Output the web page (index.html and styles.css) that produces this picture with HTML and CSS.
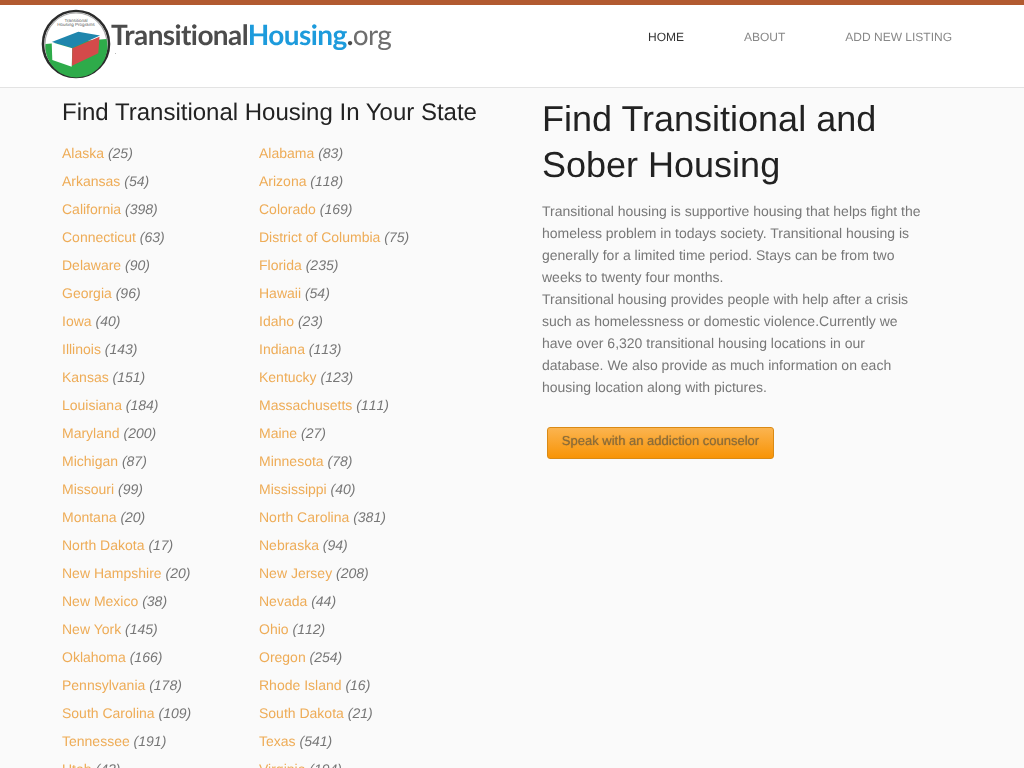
FILE: index.html
```html
<!DOCTYPE html>
<html lang="en">
<head>
<meta charset="utf-8">
<title>Transitional Housing</title>
<link rel="stylesheet" href="styles.css">
</head>
<body>
<header class="site-header">
  <a class="logo" href="#">
    <svg class="logo-mark" width="70" height="70" viewBox="0 0 70 70" aria-hidden="true">
      <circle cx="35" cy="35" r="33" fill="#fff" stroke="#2c2c2c" stroke-width="2.6"/>
      <circle cx="35" cy="35" r="31" fill="none" stroke="#a9a9a9" stroke-width="1.2"/>
      <path d="M4.5 35 L65.5 30 A31 31 0 1 1 4.5 35 Z" fill="#2eab4a"/>
      <path d="M10.7 33 L37.3 22.7 L59 26.5 L31.3 39 Z" fill="#1f86ad"/>
      <path d="M10.7 33.3 L31.3 39.3 L30.7 57.7 L11.3 51 Z" fill="#fff"/>
      <path d="M31.3 39.3 L58.5 27.7 L57.3 44.3 L31 56.7 Z" fill="#d44a4a"/>
      <text class="logo-tiny" x="35" y="12.5" text-anchor="middle">Transitional</text>
      <text class="logo-tiny" x="35" y="17" text-anchor="middle">Housing Programs</text>
    </svg>
    <span class="logo-text"><span class="logo-dark">Transitional</span><span class="logo-blue">Housing</span><span class="logo-dot">.</span><span class="logo-org">org</span></span>
  </a>
  <nav class="main-nav">
    <a class="nav-link active" href="#">Home</a>
    <a class="nav-link" href="#">About</a>
    <a class="nav-link" href="#">Add New Listing</a>
  </nav>
</header>
<main class="content">
  <section class="states">
    <h2 class="states-title">Find Transitional Housing In Your State</h2>
    <ul class="state-list">
      <li><a href="#">Alaska</a> <em>(25)</em></li><li><a href="#">Alabama</a> <em>(83)</em></li>
      <li><a href="#">Arkansas</a> <em>(54)</em></li><li><a href="#">Arizona</a> <em>(118)</em></li>
      <li><a href="#">California</a> <em>(398)</em></li><li><a href="#">Colorado</a> <em>(169)</em></li>
      <li><a href="#">Connecticut</a> <em>(63)</em></li><li><a href="#">District of Columbia</a> <em>(75)</em></li>
      <li><a href="#">Delaware</a> <em>(90)</em></li><li><a href="#">Florida</a> <em>(235)</em></li>
      <li><a href="#">Georgia</a> <em>(96)</em></li><li><a href="#">Hawaii</a> <em>(54)</em></li>
      <li><a href="#">Iowa</a> <em>(40)</em></li><li><a href="#">Idaho</a> <em>(23)</em></li>
      <li><a href="#">Illinois</a> <em>(143)</em></li><li><a href="#">Indiana</a> <em>(113)</em></li>
      <li><a href="#">Kansas</a> <em>(151)</em></li><li><a href="#">Kentucky</a> <em>(123)</em></li>
      <li><a href="#">Louisiana</a> <em>(184)</em></li><li><a href="#">Massachusetts</a> <em>(111)</em></li>
      <li><a href="#">Maryland</a> <em>(200)</em></li><li><a href="#">Maine</a> <em>(27)</em></li>
      <li><a href="#">Michigan</a> <em>(87)</em></li><li><a href="#">Minnesota</a> <em>(78)</em></li>
      <li><a href="#">Missouri</a> <em>(99)</em></li><li><a href="#">Mississippi</a> <em>(40)</em></li>
      <li><a href="#">Montana</a> <em>(20)</em></li><li><a href="#">North Carolina</a> <em>(381)</em></li>
      <li><a href="#">North Dakota</a> <em>(17)</em></li><li><a href="#">Nebraska</a> <em>(94)</em></li>
      <li><a href="#">New Hampshire</a> <em>(20)</em></li><li><a href="#">New Jersey</a> <em>(208)</em></li>
      <li><a href="#">New Mexico</a> <em>(38)</em></li><li><a href="#">Nevada</a> <em>(44)</em></li>
      <li><a href="#">New York</a> <em>(145)</em></li><li><a href="#">Ohio</a> <em>(112)</em></li>
      <li><a href="#">Oklahoma</a> <em>(166)</em></li><li><a href="#">Oregon</a> <em>(254)</em></li>
      <li><a href="#">Pennsylvania</a> <em>(178)</em></li><li><a href="#">Rhode Island</a> <em>(16)</em></li>
      <li><a href="#">South Carolina</a> <em>(109)</em></li><li><a href="#">South Dakota</a> <em>(21)</em></li>
      <li><a href="#">Tennessee</a> <em>(191)</em></li><li><a href="#">Texas</a> <em>(541)</em></li>
      <li><a href="#">Utah</a> <em>(43)</em></li><li><a href="#">Virginia</a> <em>(194)</em></li>
    </ul>
  </section>
  <section class="intro">
    <h1 class="intro-title">Find Transitional and Sober Housing</h1>
    <p class="intro-text">Transitional housing is supportive housing that helps fight the homeless problem in todays society. Transitional housing is generally for a limited time period. Stays can be from two weeks to twenty four months.<br>Transitional housing provides people with help after a crisis such as homelessness or domestic violence.Currently we have over 6,320 transitional housing locations in our database. We also provide as much information on each housing location along with pictures.</p>
    <a class="cta" href="#">Speak with an addiction counselor</a>
  </section>
</main>
</body>
</html>
```
FILE: styles.css
```css
* { box-sizing: border-box; }
html, body { margin: 0; padding: 0; }
body {
  background: #fafafa;
  color: #777;
  font-family: "Liberation Sans", Arial, sans-serif;
  font-size: 14px;
  line-height: 22px;
  text-rendering: geometricPrecision;
}
a { text-decoration: none; }

.site-header {
  display: flex;
  justify-content: space-between;
  height: 88px;
  padding: 0 72px 0 41px;
  background: #fff;
  border-top: 5px solid #b25a30;
  border-bottom: 1px solid #e3e3e3;
}
.logo { position: relative; display: flex; align-items: flex-start; padding-top: 4px; }
.logo::after {
  content: "";
  position: absolute;
  left: 74px;
  top: 48px;
  width: 1px;
  height: 1px;
  background: #bbb;
}
.logo-mark { flex: none; }
.logo-tiny { font: 4.5px "Liberation Sans", Arial, sans-serif; fill: #555; }
.logo-text {
  margin: 5px 0 0 0;
  font-family: Lato, sans-serif;
  font-size: 28px;
  font-weight: 700;
  line-height: 40px;
  letter-spacing: -.6px;
  white-space: nowrap;
  will-change: transform;
}
.logo-dark { color: #4c4c4c; }
.logo-blue { color: #1d9bdc; }
.logo-dot { color: #4c4c4c; }
.logo-org { color: #6e6e6e; font-weight: 400; }

.main-nav { display: flex; gap: 60px; padding-top: 21px; will-change: transform; }
.nav-link { color: #888; font-size: 12px; text-transform: uppercase; }
.nav-link.active { color: #333; }

.content {
  display: flex;
  align-items: flex-start;
  padding: 0 62px;
  will-change: transform;
}
.states { flex: none; width: 480px; }
.states-title {
  margin: 11px 0 12px;
  color: #222;
  font-size: 24px;
  font-weight: 400;
  line-height: 28px;
}
.state-list {
  display: grid;
  grid-template-columns: 197px 1fr;
  grid-auto-rows: 28px;
  margin: 0;
  padding: 0;
  list-style: none;
}
.state-list li { line-height: 28px; white-space: nowrap; }
.state-list a { color: #eeac57; }
.state-list em { color: #777; font-kerning: none; }

.intro { flex: none; width: 384px; padding-top: 8px; }
.intro-title {
  margin: 0 0 12px;
  color: #222;
  font-size: 36px;
  font-weight: 400;
  line-height: 46px;
}
.intro-text { margin: 0 0 29px; }
.cta {
  display: block;
  width: 227px;
  height: 32px;
  margin-left: 5px;
  border: 1px solid #da8a14;
  border-radius: 3px;
  background: linear-gradient(#fbb450, #f89406);
  color: #8a6d3b;
  font-size: 13px;
  line-height: 26px;
  text-align: center;
  text-shadow: 0 0 1px rgba(80, 60, 30, .5);
}
```
